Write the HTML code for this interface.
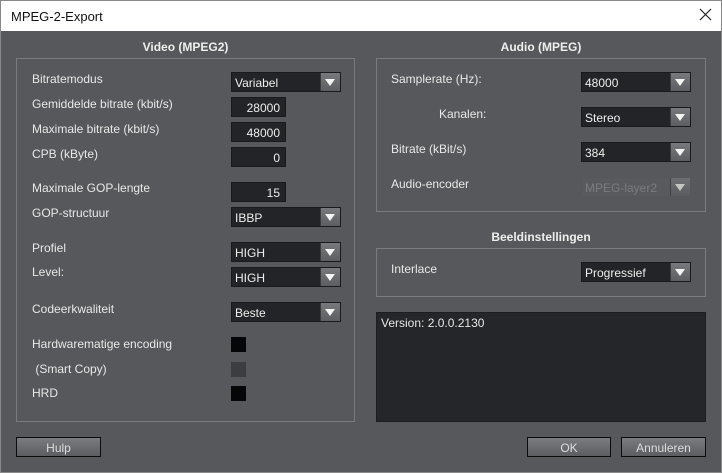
<!DOCTYPE html>
<html><head><meta charset="utf-8"><style>
*{margin:0;padding:0;box-sizing:border-box}
body{width:722px;height:473px;overflow:hidden;background:#57585c;font-family:"Liberation Sans","DejaVu Sans",sans-serif;font-size:12px;color:#e6e6e6;position:relative}
.a{position:absolute}
.title{left:0;top:0;width:722px;height:31px;background:#fff;color:#111;font-size:13px;padding:8px 0 0 10px;border:1px solid #888;border-bottom:none}
.box{border:1px solid #7a7b7e}
.h{font-weight:bold;color:#eee;text-align:center;font-size:12px}
.l{font-size:12px;color:#e8e8e8}
.dd{height:20px;background:#232427;border:1px solid #1a1a1c;color:#eee;padding:3px 0 0 3px;font-size:12px}
.dd::after{content:"";position:absolute;right:0;top:0;width:19px;height:18px;background:linear-gradient(#77797c,#5d5e62);border-left:1px solid #3a3a3c}
.dd i{position:absolute;right:5px;top:6px;width:0;height:0;border-left:5px solid transparent;border-right:5px solid transparent;border-top:7px solid #f4f4f4;z-index:2}
.tb{height:20px;background:#232427;border:1px solid #1a1a1c;color:#eee;text-align:right;padding:3px 5px 0 0}
.cb{width:15px;height:15px;background:#060606}
.btn{height:20px;border:1px solid #0c0c0c;background:linear-gradient(#7a7c80,#5c5d61);color:#ddd;text-align:center;font-size:12px;padding-top:3px}
</style></head><body>
<div class="a title">MPEG-2-Export</div>
<svg class="a" style="left:699px;top:8px" width="13" height="13"><path d="M1 1L12 12M12 1L1 12" stroke="#222" stroke-width="1.2"/></svg>
<div class="a" style="left:0;top:31px;width:1px;height:442px;background:#8a8a8a"></div>
<div class="a" style="right:0;top:31px;width:1px;height:442px;background:#8a8a8a"></div>
<div class="a" style="left:0;bottom:0;width:722px;height:1px;background:#8a8a8a"></div>

<div class="a h" style="left:16px;top:40px;width:339px">Video (MPEG2)</div>
<div class="a box" style="left:16px;top:58px;width:339px;height:364px"></div>
<div class="a l" style="left:32px;top:72px">Bitratemodus</div>
<div class="a l" style="left:32px;top:97px">Gemiddelde bitrate (kbit/s)</div>
<div class="a l" style="left:32px;top:122px">Maximale bitrate (kbit/s)</div>
<div class="a l" style="left:32px;top:147px">CPB (kByte)</div>
<div class="a l" style="left:32px;top:181px">Maximale GOP-lengte</div>
<div class="a l" style="left:32px;top:206px">GOP-structuur</div>
<div class="a l" style="left:32px;top:241px">Profiel</div>
<div class="a l" style="left:32px;top:265px">Level:</div>
<div class="a l" style="left:32px;top:302px">Codeerkwaliteit</div>
<div class="a l" style="left:32px;top:337px">Hardwarematige encoding</div>
<div class="a l" style="left:32px;top:362px">&nbsp;(Smart Copy)</div>
<div class="a l" style="left:32px;top:386px">HRD</div>
<div class="a dd" style="left:231px;top:72px;width:110px">Variabel<i></i></div>
<div class="a tb" style="left:231px;top:97px;width:55px">28000</div>
<div class="a tb" style="left:231px;top:122px;width:55px">48000</div>
<div class="a tb" style="left:231px;top:147px;width:55px">0</div>
<div class="a tb" style="left:231px;top:182px;width:55px">15</div>
<div class="a dd" style="left:231px;top:207px;width:110px">IBBP<i></i></div>
<div class="a dd" style="left:231px;top:242px;width:110px">HIGH<i></i></div>
<div class="a dd" style="left:231px;top:267px;width:110px">HIGH<i></i></div>
<div class="a dd" style="left:231px;top:302px;width:110px">Beste<i></i></div>
<div class="a cb" style="left:231px;top:337px"></div>
<div class="a cb" style="left:231px;top:362px;background:#3c3d40"></div>
<div class="a cb" style="left:231px;top:386px"></div>

<div class="a h" style="left:376px;top:40px;width:330px">Audio (MPEG)</div>
<div class="a box" style="left:376px;top:58px;width:330px;height:154px"></div>
<div class="a l" style="left:391px;top:72px">Samplerate (Hz):</div>
<div class="a l" style="left:439px;top:107px">Kanalen:</div>
<div class="a l" style="left:391px;top:142px">Bitrate (kBit/s)</div>
<div class="a l" style="left:391px;top:177px">Audio-encoder</div>
<div class="a dd" style="left:581px;top:72px;width:110px">48000<i></i></div>
<div class="a dd" style="left:581px;top:107px;width:110px">Stereo<i></i></div>
<div class="a dd" style="left:581px;top:142px;width:110px">384<i></i></div>
<div class="a dd" style="left:581px;top:177px;width:110px;background:#5a5b5f;border-color:#56575a;color:#8a8b8e;opacity:.7">MPEG-layer2<i></i></div>

<div class="a h" style="left:376px;top:230px;width:330px">Beeldinstellingen</div>
<div class="a box" style="left:376px;top:248px;width:330px;height:49px"></div>
<div class="a l" style="left:391px;top:262px">Interlace</div>
<div class="a dd" style="left:581px;top:262px;width:110px">Progressief<i></i></div>

<div class="a" style="left:376px;top:312px;width:330px;height:110px;background:#252629;border:1px solid #1e1e20;padding:3px 0 0 4px">Version: 2.0.0.2130</div>

<div class="a btn" style="left:16px;top:437px;width:85px">Hulp</div>
<div class="a btn" style="left:527px;top:437px;width:84px">OK</div>
<div class="a btn" style="left:621px;top:437px;width:85px">Annuleren</div>
</body></html>
